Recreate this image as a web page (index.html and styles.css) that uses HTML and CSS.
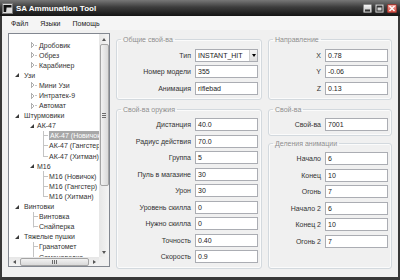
FILE: index.html
```html
<!DOCTYPE html>
<html>
  <head>
    <title>SA Ammunation Tool</title>
    <link rel="stylesheet" href="styles.css">
  </head>
  <body>
    <div id="window">
      <div id="title-bar">
        <svg class="app-icon" width="11" height="11" viewBox="0 0 11 11">
          <rect x="0.5" y="0.5" width="10" height="10" fill="#dcdcdc" stroke="#7a7a7a" />
          <path d="M1.5 2H9.5V4.5H4.6L4.1 9H1.6Z" fill="#111" />
        </svg>
        <span class="title">SA Ammunation Tool</span>
        <div class="caption-buttons">
          <span class="cap-btn min">
            <svg width="7" height="7" viewBox="0 0 7 7"><rect x="1" y="4.5" width="5" height="2" fill="#333" /></svg>
          </span>
          <span class="cap-btn max">
            <svg width="7" height="7" viewBox="0 0 7 7"><rect x="1" y="1" width="5" height="5" fill="none" stroke="#333" /><rect x="1" y="1" width="5" height="1.5" fill="#333" /></svg>
          </span>
          <span class="cap-btn close">
            <svg width="8" height="7" viewBox="0 0 8 7"><path d="M1.5 1L6.5 6M6.5 1L1.5 6" stroke="#fff" stroke-width="1.4" /></svg>
          </span>
        </div>
      </div>

      <div id="client">
        <div id="menu-bar">
          <span>Файл</span>
          <span>Языки</span>
          <span>Помощь</span>
        </div>

        <div id="main">
          <div id="tree">
            <div class="tree-items">
              <div class="node l1"><i class="collapsed"></i>Дробовик</div>
              <div class="node l1"><i class="collapsed"></i>Обрез</div>
              <div class="node l1"><i class="collapsed"></i>Карабинер</div>
              <div class="node g0"><i class="expanded"></i>Узи</div>
              <div class="node l1"><i class="collapsed"></i>Мини Узи</div>
              <div class="node l1"><i class="collapsed"></i>Интратек-9</div>
              <div class="node l1"><i class="collapsed"></i>Автомат</div>
              <div class="node g0"><i class="expanded"></i>Штурмовики</div>
              <div class="node g1"><i class="expanded"></i>АК-47</div>
              <div class="node l2"><i class="tee"></i><span class="selected">АК-47 (Новичок)</span></div>
              <div class="node l2"><i class="tee"></i>АК-47 (Гангстер)</div>
              <div class="node l2"><i class="elbow"></i>АК-47 (Хитман)</div>
              <div class="node g1"><i class="expanded"></i>M16</div>
              <div class="node l2"><i class="tee"></i>M16 (Новичок)</div>
              <div class="node l2"><i class="tee"></i>M16 (Гангстер)</div>
              <div class="node l2"><i class="elbow"></i>M16 (Хитман)</div>
              <div class="node g0"><i class="expanded"></i>Винтовки</div>
              <div class="node leaf"><i class="tee"></i>Винтовка</div>
              <div class="node leaf"><i class="elbow"></i>Снайперка</div>
              <div class="node g0"><i class="expanded"></i>Тяжелые пушки</div>
              <div class="node leaf"><i class="tee"></i>Гранатомет</div>
              <div class="node leaf"><i class="tee"></i>Самонаводка</div>
            </div>
            <div class="vscroll">
              <span class="arrow up"></span>
              <div class="track"><span class="thumb"></span></div>
              <span class="arrow down"></span>
            </div>
            <div class="hscroll">
              <span class="arrow left"></span>
              <div class="track"><span class="thumb"></span></div>
              <span class="arrow right"></span>
            </div>
            <div class="corner"></div>
          </div>

          <div class="column">
            <fieldset class="group">
              <legend>Общие свой-ва</legend>
              <div class="fields">
                <label>Тип</label>
                <div class="combo"><span class="value">INSTANT_HIT</span><span class="combo-btn"></span></div>
                <label>Номер модели</label>
                <div class="input">355</div>
                <label>Анимация</label>
                <div class="input">riflebad</div>
              </div>
            </fieldset>

            <fieldset class="group grow">
              <legend>Свой-ва оружия</legend>
              <div class="fields">
                <label>Дистанция</label>
                <div class="input">40.0</div>
                <label>Радиус действия</label>
                <div class="input">70.0</div>
                <label>Группа</label>
                <div class="input">5</div>
                <label>Пуль в магазине</label>
                <div class="input">30</div>
                <label>Урон</label>
                <div class="input">30</div>
                <label>Уровень скилла</label>
                <div class="input">0</div>
                <label>Нужно скилла</label>
                <div class="input">0</div>
                <label>Точность</label>
                <div class="input">0.40</div>
                <label>Скорость</label>
                <div class="input">0.9</div>
              </div>
            </fieldset>
          </div>

          <div class="column">
            <fieldset class="group">
              <legend>Направление</legend>
              <div class="fields">
                <label>X</label>
                <div class="input">0.78</div>
                <label>Y</label>
                <div class="input">-0.06</div>
                <label>Z</label>
                <div class="input">0.13</div>
              </div>
            </fieldset>

            <fieldset class="group">
              <legend>Свой-ва</legend>
              <div class="fields">
                <label>Свой-ва</label>
                <div class="input">7001</div>
              </div>
            </fieldset>

            <fieldset class="group grow anim">
              <legend>Деления анимации</legend>
              <div class="fields">
                <label>Начало</label>
                <div class="input">6</div>
                <label>Конец</label>
                <div class="input">10</div>
                <label>Огонь</label>
                <div class="input">7</div>
                <label>Начало 2</label>
                <div class="input">6</div>
                <label>Конец 2</label>
                <div class="input">10</div>
                <label>Огонь 2</label>
                <div class="input">7</div>
              </div>
            </fieldset>
          </div>
        </div>
      </div>
    </div>
  </body>
</html>
```

FILE: styles.css
```css
body {
  margin: 0;
  padding: 0;
  font-family: "Liberation Sans", Arial, sans-serif;
  font-size: 7px;
  color: #333;
}

#window {
  width: 400px;
  height: 280px;
  display: flex;
  flex-direction: column;
  background-color: #f0f0f0;
}

/* title bar */

#title-bar {
  height: 16px;
  flex-shrink: 0;
  display: flex;
  align-items: center;
  padding: 0 3px 0 2px;
  background: linear-gradient(#777, #3c3c3c 45%, #141414);
  color: #fff;
}

.app-icon {
  margin-right: 3px;
}

.title {
  flex: 1;
  font-size: 8px;
  font-weight: bold;
}

.caption-buttons {
  display: flex;
  gap: 3px;
}

.cap-btn {
  width: 9px;
  height: 9px;
  box-sizing: border-box;
  border: 1px solid #8c8c8c;
  border-radius: 1px;
  background: linear-gradient(#f6f6f6, #bcbcbc);
  display: flex;
  align-items: center;
  justify-content: center;
}

.cap-btn.close {
  width: 10px;
  border-color: #9a3a34;
  background: linear-gradient(#f0a49c, #d4493e);
}

/* window body */

#client {
  flex: 1;
  display: flex;
  flex-direction: column;
  border: solid #383838;
  border-width: 0 2px 3px 2px;
  min-height: 0;
}

#menu-bar {
  height: 14px;
  flex-shrink: 0;
  display: flex;
  align-items: center;
  gap: 12px;
  padding-left: 9px;
  background-color: #f5f5f5;
  color: #222;
}

#main {
  flex: 1;
  min-height: 0;
  display: grid;
  grid-template-columns: 102px 146px 124px;
  column-gap: 6px;
  padding: 3px 6px 8px;
}

/* tree view */

#tree {
  margin-bottom: 2px;
  border: 1px solid #828790;
  background-color: #fff;
  display: grid;
  grid-template-columns: 1fr 10px;
  grid-template-rows: 1fr 9px;
  overflow: hidden;
}

.tree-items {
  padding-top: 6px;
  overflow: hidden;
  min-width: 0;
}

.node {
  height: 10.1px;
  display: flex;
  align-items: center;
  white-space: nowrap;
  color: #333;
}

.node i {
  flex-shrink: 0;
}

.node.g0 {
  padding-left: 6px;
}

.node.g1 {
  padding-left: 21px;
}

.node.l1 {
  padding-left: 22px;
}

.node.leaf {
  padding-left: 24px;
}

.node.l2 {
  padding-left: 34px;
}

.expanded {
  width: 0;
  height: 0;
  border-style: solid;
  border-width: 0 0 4px 4px;
  border-color: transparent transparent #3a3a3a transparent;
  margin-right: 5px;
}

.g1 .expanded {
  margin-right: 3px;
}

.collapsed {
  width: 3px;
  height: 6px;
  margin-right: 5px;
  position: relative;
  background:
    linear-gradient(to top right, transparent 45%, #b0b0b0 45%, #b0b0b0 60%, transparent 60%) 0 0 / 3px 3px no-repeat,
    linear-gradient(to bottom right, transparent 45%, #b0b0b0 45%, #b0b0b0 60%, transparent 60%) 0 3px / 3px 3px no-repeat,
    linear-gradient(#b0b0b0, #b0b0b0) 0 0 / 1px 6px no-repeat;
}

.collapsed::after {
  content: "";
  display: block;
  width: 2px;
  height: 1px;
  margin-left: 4px;
  margin-top: 2.5px;
  background-color: #c4c4c4;
}

.tee,
.elbow {
  align-self: stretch;
  width: 5px;
  margin-right: 1px;
}

.tee {
  background:
    linear-gradient(#c4c4c4, #c4c4c4) 0 0 / 1px 100% no-repeat,
    linear-gradient(#c4c4c4, #c4c4c4) 0 50% / 5px 1px no-repeat;
}

.elbow {
  background:
    linear-gradient(#c4c4c4, #c4c4c4) 0 0 / 1px 55% no-repeat,
    linear-gradient(#c4c4c4, #c4c4c4) 0 50% / 5px 1px no-repeat;
}

.selected {
  background-color: #a8a8a8;
  color: #fff;
  padding: 0 2px 0 1px;
  line-height: 9px;
}

.vscroll {
  display: flex;
  flex-direction: column;
  background: linear-gradient(90deg, #e6e6e6, #f4f4f4);
}

.hscroll {
  display: flex;
  background: linear-gradient(#e6e6e6, #f4f4f4);
}

.corner {
  background-color: #f0f0f0;
}

.arrow {
  flex-shrink: 0;
  width: 10px;
  height: 10px;
  display: flex;
  align-items: center;
  justify-content: center;
}

.hscroll .arrow {
  height: 9px;
}

.arrow::after {
  content: "";
  border-style: solid;
}

.arrow.up::after {
  border-width: 0 2.5px 3px;
  border-color: transparent transparent #555;
}

.arrow.down::after {
  border-width: 3px 2.5px 0;
  border-color: #555 transparent transparent;
}

.arrow.left::after {
  border-width: 2.5px 3px 2.5px 0;
  border-color: transparent #555 transparent transparent;
}

.arrow.right::after {
  border-width: 2.5px 0 2.5px 3px;
  border-color: transparent transparent transparent #555;
}

.track {
  flex: 1;
  display: flex;
}

.thumb {
  box-sizing: border-box;
  border: 1px solid #a4a4a4;
  border-radius: 2px;
  display: flex;
  align-items: center;
  justify-content: center;
}

.vscroll .thumb {
  width: 9px;
  height: 142px;
  margin-left: 0.5px;
  background: linear-gradient(90deg, #f2f2f2, #d9d9d9);
}

.vscroll .thumb::after {
  content: "";
  width: 4px;
  height: 5px;
  background: repeating-linear-gradient(#6c6c6c 0 1px, transparent 1px 2px);
}

.hscroll .thumb {
  width: 69px;
  height: 8px;
  margin-top: 0.5px;
  margin-left: 1px;
  background: linear-gradient(#f2f2f2, #d9d9d9);
}

.hscroll .thumb::after {
  content: "";
  width: 5px;
  height: 4px;
  background: repeating-linear-gradient(90deg, #6c6c6c 0 1px, transparent 1px 2px);
}

/* property groups */

.column {
  display: flex;
  flex-direction: column;
  min-width: 0;
}

.group {
  margin: 2px 0 0;
  padding: 4.5px 3px 4px 4px;
  border: 1px solid #d3d9de;
  border-radius: 3px;
  box-shadow: inset 0 0 0 1px #fbfbfb;
  min-width: 0;
}

.group + .group {
  margin-top: 5px;
}

.group.anim {
  margin-top: 2.5px;
}

.group.grow {
  flex: 1;
}

.group legend {
  padding: 0 2px;
  line-height: 9px;
  color: #8e8e8e;
}

.fields {
  display: grid;
  grid-template-columns: 1fr 63px;
  grid-auto-rows: 13px;
  column-gap: 4px;
  row-gap: 3.5px;
  align-items: center;
}

.fields label {
  text-align: right;
  white-space: nowrap;
  color: #333;
}

.input,
.combo {
  height: 13px;
  box-sizing: border-box;
  border: 1px solid #abadb3;
  background-color: #fff;
  color: #222;
  line-height: 11px;
}

.input {
  padding-left: 2px;
}

.combo {
  display: flex;
}

.combo .value {
  flex: 1;
  padding-left: 2px;
}

.combo-btn {
  width: 7px;
  border-left: 1px solid #cfcfcf;
  background: linear-gradient(#f4f4f4, #dedede);
  display: flex;
  align-items: center;
  justify-content: center;
}

.combo-btn::after {
  content: "";
  border-style: solid;
  border-width: 3px 2.5px 0;
  border-color: #000 transparent transparent;
}
```
